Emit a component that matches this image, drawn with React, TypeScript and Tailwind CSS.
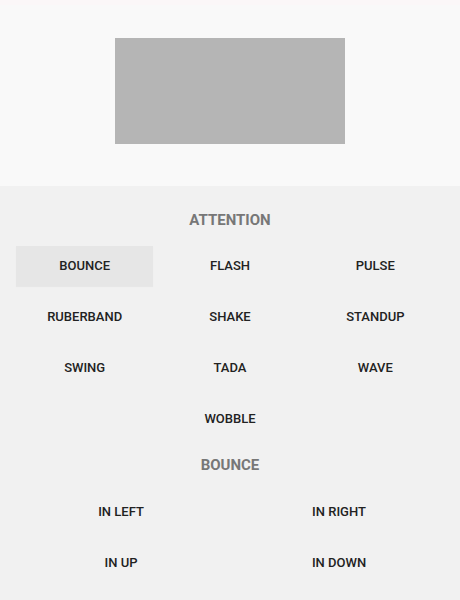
const attention = ["Bounce", "Flash", "Pulse", "Ruberband", "Shake", "Standup", "Swing", "Tada", "Wave", "Wobble"];
const bounce = ["In Left", "In Right", "In Up", "In Down"];

function AnimButton({ label, active }: { label: string; active?: boolean }) {
  return (
    <div className="h-[51px] flex items-center px-1">
      <button
        className={`w-full h-10 flex items-center justify-center uppercase text-[13px] font-medium text-[#222] ${
          active ? "bg-[#e6e6e6] shadow-[0_1px_1px_rgba(0,0,0,0.04)]" : ""
        }`}
      >
        {label}
      </button>
    </div>
  );
}

export default function App() {
  return (
    <div className="w-[460px] h-[600px] overflow-hidden bg-[#f1f1f1] font-['Roboto',sans-serif]">
      <div className="h-[186px] bg-[#f9f9f9] flex flex-col">
        <div className="h-[5px] bg-[#fbf7f8]" />
        <div className="flex-1 flex justify-center pt-[33px]">
          <div className="w-[230px] h-[106px] bg-[#b5b5b5]" />
        </div>
      </div>

      <div className="px-3">
        <h2 className="h-[54px] pt-[15px] flex items-center justify-center text-[15px] font-bold text-[#777]">
          ATTENTION
        </h2>
        <div className="grid grid-cols-3">
          {attention.slice(0, 9).map((a, i) => (
            <AnimButton key={a} label={a} active={i === 0} />
          ))}
          <div />
          <AnimButton label={attention[9]} />
          <div />
        </div>

        <h2 className="h-[42px] flex items-center justify-center text-[15px] font-bold text-[#777]">
          BOUNCE
        </h2>
        <div className="grid grid-cols-2">
          {bounce.map((b) => (
            <AnimButton key={b} label={b} />
          ))}
        </div>
      </div>
    </div>
  );
}
